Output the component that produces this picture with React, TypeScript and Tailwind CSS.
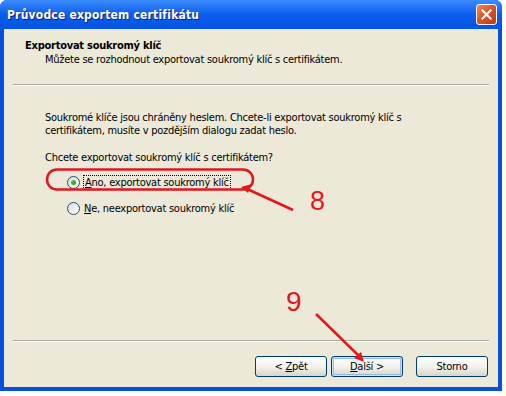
import React from "react";

const font = { fontFamily: '"DejaVu Sans Condensed", "DejaVu Sans", sans-serif' };

function Radio({ checked }: { checked?: boolean }) {
  return (
    <span className="flex h-[13px] w-[13px] items-center justify-center rounded-full border border-[#1C5180] bg-gradient-to-br from-[#DCDCD7] to-white">
      {checked && (
        <span className="h-[5px] w-[5px] rounded-full bg-gradient-to-br from-[#55D551] to-[#1E8A1E]" />
      )}
    </span>
  );
}

function Btn({ children, def }: { children: React.ReactNode; def?: boolean }) {
  return (
    <div
      className={
        "flex h-[21px] w-[72px] items-center justify-center rounded-[3px] border border-[#003C74] bg-gradient-to-b from-white via-[#F4F3EE] to-[#D8D4C8] text-[11px] text-black " +
        (def ? "shadow-[inset_0_0_0_1px_#CEE7FF,inset_0_0_0_2px_#98B8EA]" : "")
      }
    >
      {children}
    </div>
  );
}

export default function App() {
  return (
    <div className="relative h-[396px] w-[506px] bg-white" style={font}>
      <div className="flex h-[391px] w-[502px] flex-col overflow-hidden rounded-t-[7px] bg-[#0A4FD8]">
        {/* Title bar */}
        <div className="flex h-[29px] shrink-0 items-center justify-between bg-gradient-to-b from-[#3B8BFF] via-[#0A5CEC] to-[#0455E0] pl-[7px] pr-[5px]">
          <span className="text-[12px] font-bold tracking-[0.2px] text-white [text-shadow:1px_1px_0_#0A1E8A]">
            Průvodce exportem certifikátu
          </span>
          <div className="flex h-[21px] w-[21px] items-center justify-center rounded-[3px] border border-white bg-gradient-to-br from-[#E8875F] via-[#D9502B] to-[#C3360E]">
            <svg width="11" height="11" viewBox="0 0 11 11">
              <path d="M1.5 1.5 L9.5 9.5 M9.5 1.5 L1.5 9.5" stroke="white" strokeWidth="2.2" strokeLinecap="square" />
            </svg>
          </div>
        </div>
        {/* Body */}
        <div className="mx-[4px] mb-[4px] flex flex-1 flex-col bg-[#ECE9D8] text-[11px] leading-[13px] tracking-[-0.25px] text-black">
          <div className="pl-[21px] pt-[10px]">
            <div className="font-bold">Exportovat soukromý klíč</div>
            <div className="mt-[1px] pl-[20px]">Můžete se rozhodnout exportovat soukromý klíč s certifikátem.</div>
          </div>
          <div className="mx-[9px] mt-[18px] h-[2px] border-t border-[#ACA899]" style={{ borderBottom: "1px solid #fff" }} />
          <div className="flex flex-1 flex-col pl-[41px] pt-[25px]">
            <div>Soukromé klíče jsou chráněny heslem. Chcete-li exportovat soukromý klíč s</div>
            <div>certifikátem, musíte v pozdějším dialogu zadat heslo.</div>
            <div className="mt-[14px]">Chcete exportovat soukromý klíč s certifikátem?</div>
            <div className="mt-[11px] flex items-center pl-[22px]">
              <Radio checked />
              <span className="ml-[3px] border border-dotted border-black px-[1px]">
                <span className="underline">A</span>no, exportovat soukromý klíč
              </span>
            </div>
            <div className="mt-[12px] flex items-center pl-[22px]">
              <Radio />
              <span className="ml-[4px]">
                <span className="underline">N</span>e, neexportovat soukromý klíč
              </span>
            </div>
          </div>
          <div className="mx-[9px] h-[2px] border-t border-[#ACA899]" style={{ borderBottom: "1px solid #fff" }} />
          <div className="flex items-center justify-end pb-[10px] pr-[10px] pt-[14px]">
            <Btn>
              &lt; <span className="ml-[3px] underline">Z</span>pět
            </Btn>
            <div className="ml-[4px]">
              <Btn def>
                <span className="underline">D</span>alší &gt;
              </Btn>
            </div>
            <div className="ml-[13px]">
              <Btn>Storno</Btn>
            </div>
          </div>
        </div>
      </div>

      {/* Annotations overlay */}
      <svg className="pointer-events-none absolute left-0 top-0" width="506" height="396">
        <rect x="47" y="169.5" width="206" height="20" rx="10" fill="none" stroke="#E3161E" strokeWidth="2.5" />
        <line x1="293" y1="210" x2="245" y2="188" stroke="#E3161E" strokeWidth="2.5" />
        <polygon points="241,187 252,184 248,193" fill="#E3161E" />
        <line x1="316" y1="314" x2="360" y2="357" stroke="#E3161E" strokeWidth="2.5" />
        <polygon points="364,362 354,358 361,352" fill="#E3161E" />
      </svg>
      <span
        className="absolute left-[310px] top-[186px] text-[27px] leading-[30px] text-[#E3161E]"
        style={{ fontFamily: '"Liberation Sans", Arial, sans-serif' }}
      >
        8
      </span>
      <span
        className="absolute left-[286px] top-[287px] text-[28px] leading-[30px] text-[#E3161E]"
        style={{ fontFamily: '"Liberation Sans", Arial, sans-serif' }}
      >
        9
      </span>
    </div>
  );
}
